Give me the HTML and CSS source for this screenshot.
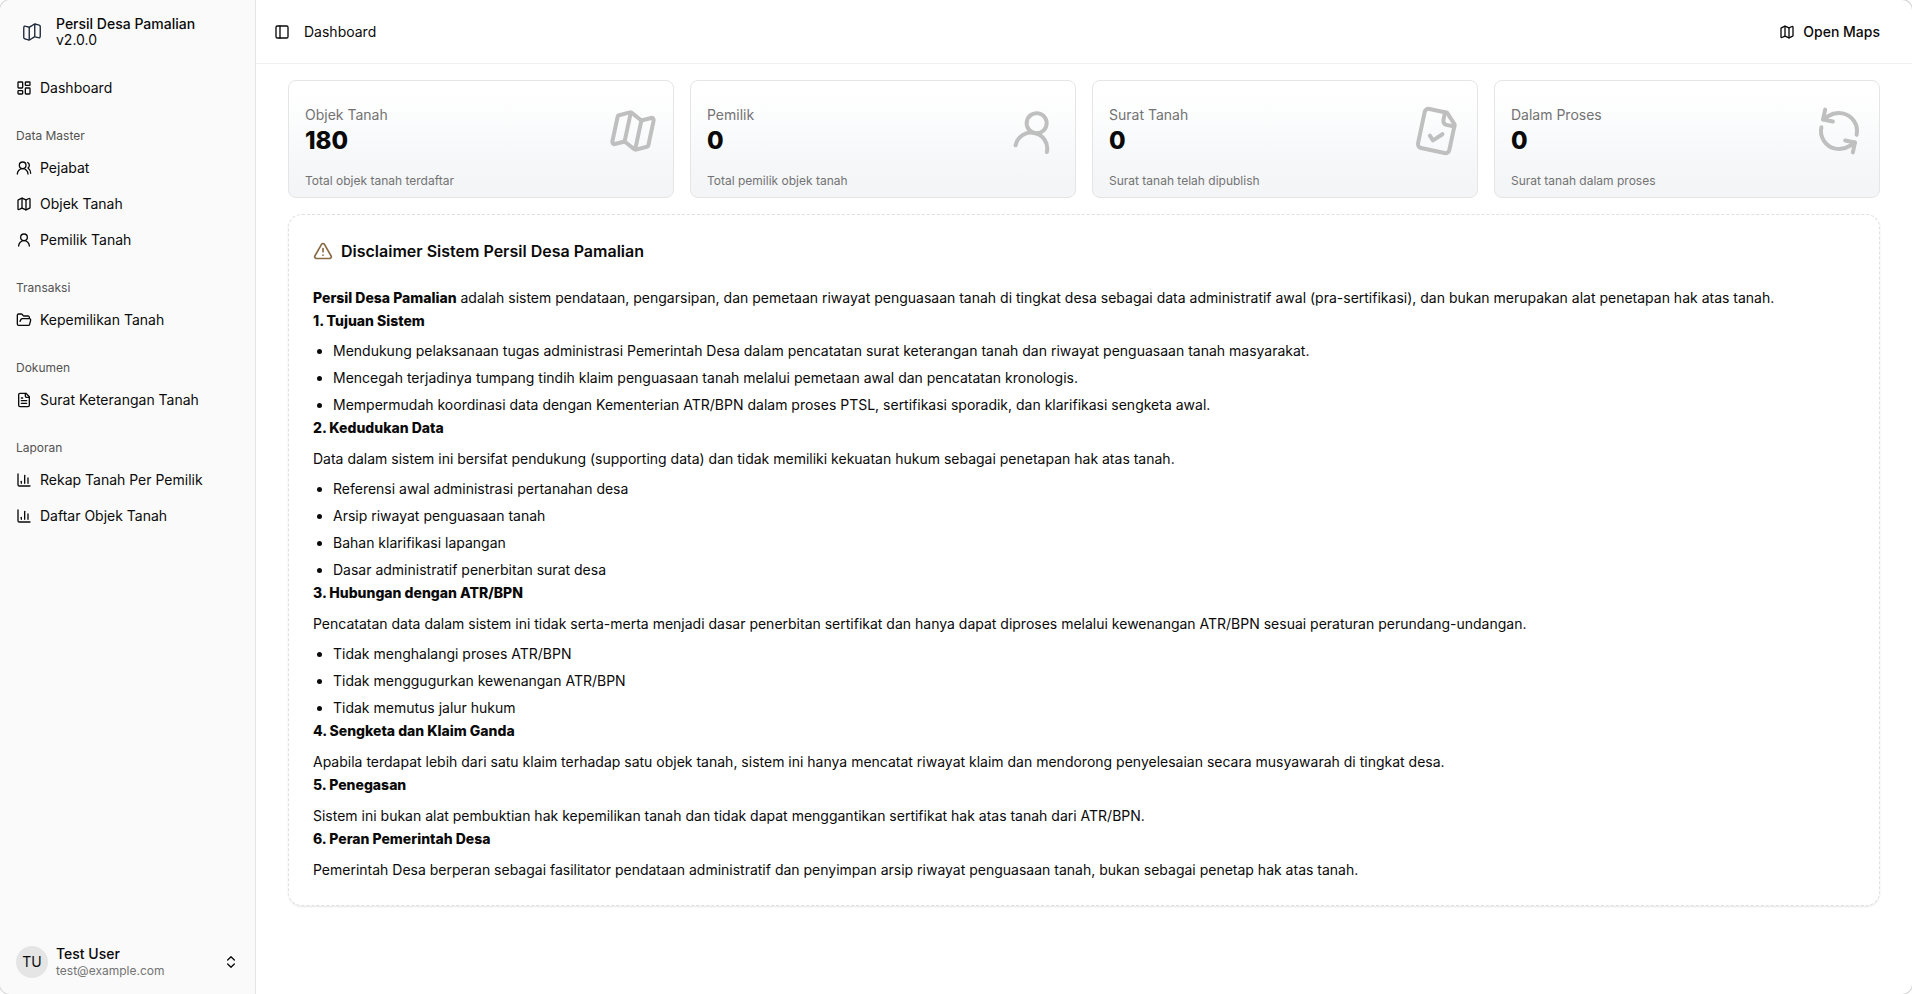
FILE: index.html
```html
<!doctype html>
<html lang="id">
<head>
    <meta charset="utf-8">
    <meta name="viewport" content="width=device-width, initial-scale=1">
    <link rel="stylesheet" href="styles.css">
    <title>Dashboard - Persil Desa Pamalian</title>
</head>
<body>
    <!-- icon sprite -->
    <svg class="sprite" aria-hidden="true">
        <symbol id="i-brand" viewBox="0 0 24 24">
            <path d="M3 8.71C3 7.24 3 6.5 3.39 6.07a1.5 1.5 0 0 1 .5-.36C4.42 5.47 5.12 5.71 6.52 6.17 7.59 6.53 8.12 6.71 8.66 6.69A3 3 0 0 0 9.25 6.61C9.77 6.49 10.24 6.17 11.18 5.55L12.56 4.63C13.76 3.83 14.36 3.43 15.05 3.34 15.73 3.24 16.42 3.47 17.78 3.93L18.95 4.32C19.94 4.65 20.43 4.81 20.72 5.2 21 5.6 21 6.12 21 7.16V15.29C21 16.76 21 17.5 20.61 17.93A1.5 1.5 0 0 1 20.11 18.29C19.58 18.53 18.88 18.29 17.48 17.83 16.41 17.47 15.88 17.29 15.34 17.31A3 3 0 0 0 14.75 17.39C14.23 17.51 13.76 17.83 12.82 18.45L11.44 19.37C10.24 20.17 9.64 20.57 8.95 20.66 8.27 20.76 7.58 20.53 6.22 20.07L5.05 19.68C4.06 19.35 3.57 19.19 3.28 18.8 3 18.4 3 17.88 3 16.84Z"/>
            <path d="M9 6.64V20.5"/><path d="M15 3.5V17"/>
        </symbol>
        <symbol id="i-map" viewBox="0 0 24 24">
            <path d="M14.106 5.553a2 2 0 0 0 1.788 0l3.659-1.83A1 1 0 0 1 21 4.619v12.764a1 1 0 0 1-.553.894l-4.553 2.277a2 2 0 0 1-1.788 0l-4.212-2.106a2 2 0 0 0-1.788 0l-3.659 1.83A1 1 0 0 1 3 19.381V6.618a1 1 0 0 1 .553-.894l4.553-2.277a2 2 0 0 1 1.788 0z"/>
            <path d="M15 5.764v15"/><path d="M9 3.236v15"/>
        </symbol>
        <symbol id="i-dashboard" viewBox="0 0 24 24">
            <rect width="7" height="9" x="3" y="3" rx="1"/><rect width="7" height="5" x="14" y="3" rx="1"/>
            <rect width="7" height="9" x="14" y="12" rx="1"/><rect width="7" height="5" x="3" y="16" rx="1"/>
        </symbol>
        <symbol id="i-users" viewBox="0 0 24 24">
            <path d="M18 21a8 8 0 0 0-16 0"/><circle cx="10" cy="8" r="5"/><path d="M22 20c0-3.37-2-6.5-4-8a5 5 0 0 0-.45-8.3"/>
        </symbol>
        <symbol id="i-user" viewBox="0 0 24 24">
            <circle cx="12" cy="8" r="5"/><path d="M20 21a8 8 0 0 0-16 0"/>
        </symbol>
        <symbol id="i-folder" viewBox="0 0 24 24">
            <path d="m6 14 1.5-2.9A2 2 0 0 1 9.24 10H20a2 2 0 0 1 1.94 2.5l-1.54 6a2 2 0 0 1-1.95 1.5H4a2 2 0 0 1-2-2V5a2 2 0 0 1 2-2h3.9a2 2 0 0 1 1.69.9l.81 1.2a2 2 0 0 0 1.67.9H18a2 2 0 0 1 2 2v2"/>
        </symbol>
        <symbol id="i-file" viewBox="0 0 24 24">
            <path d="M15 2H6a2 2 0 0 0-2 2v16a2 2 0 0 0 2 2h12a2 2 0 0 0 2-2V7Z"/><path d="M14 2v4a2 2 0 0 0 2 2h4"/>
            <path d="M10 9H8"/><path d="M16 13H8"/><path d="M16 17H8"/>
        </symbol>
        <symbol id="i-file-check" viewBox="0 0 24 24">
            <path d="M15 2H6a2 2 0 0 0-2 2v16a2 2 0 0 0 2 2h12a2 2 0 0 0 2-2V7Z"/><path d="M14 2v4a2 2 0 0 0 2 2h4"/>
            <path d="m9 15 2 2 4-4"/>
        </symbol>
        <symbol id="i-chart" viewBox="0 0 24 24">
            <path d="M3 3v16a2 2 0 0 0 2 2h16"/><path d="M18 17V9"/><path d="M13 17V5"/><path d="M8 17v-3"/>
        </symbol>
        <symbol id="i-refresh" viewBox="0 0 24 24">
            <path d="M21 12a9 9 0 0 0-9-9 9.75 9.75 0 0 0-6.74 2.74L3 8"/><path d="M3 3v5h5"/>
            <path d="M3 12a9 9 0 0 0 9 9 9.75 9.75 0 0 0 6.74-2.74L21 16"/><path d="M16 16h5v5"/>
        </symbol>
        <symbol id="i-panel" viewBox="0 0 24 24">
            <rect width="18" height="18" x="3" y="3" rx="2"/><path d="M9 3v18"/>
        </symbol>
        <symbol id="i-sort" viewBox="0 0 24 24">
            <path d="m7 15 5 5 5-5"/><path d="m7 9 5-5 5 5"/>
        </symbol>
        <symbol id="i-warning" viewBox="0 0 24 24">
            <path d="m21.73 18-8-14a2 2 0 0 0-3.48 0l-8 14A2 2 0 0 0 4 21h16a2 2 0 0 0 1.73-3"/><path d="M12 9v4"/><path d="M12 17h.01"/>
        </symbol>
    </svg>

    <div class="app">
        <aside class="sidebar">
            <a class="brand" href="#">
                <span class="brand-logo"><svg class="icon"><use href="#i-brand"/></svg></span>
                <span class="brand-text">
                    <span class="brand-name">Persil Desa Pamalian</span>
                    <span>v2.0.0</span>
                </span>
            </a>

            <nav class="nav">
                <div class="nav-group">
                    <a class="nav-link" href="#"><svg class="icon"><use href="#i-dashboard"/></svg>Dashboard</a>
                </div>
                <div class="nav-group">
                    <div class="nav-label">Data Master</div>
                    <a class="nav-link" href="#"><svg class="icon"><use href="#i-users"/></svg>Pejabat</a>
                    <a class="nav-link" href="#"><svg class="icon"><use href="#i-map"/></svg>Objek Tanah</a>
                    <a class="nav-link" href="#"><svg class="icon"><use href="#i-user"/></svg>Pemilik Tanah</a>
                </div>
                <div class="nav-group">
                    <div class="nav-label">Transaksi</div>
                    <a class="nav-link" href="#"><svg class="icon"><use href="#i-folder"/></svg>Kepemilikan Tanah</a>
                </div>
                <div class="nav-group">
                    <div class="nav-label">Dokumen</div>
                    <a class="nav-link" href="#"><svg class="icon"><use href="#i-file"/></svg>Surat Keterangan Tanah</a>
                </div>
                <div class="nav-group">
                    <div class="nav-label">Laporan</div>
                    <a class="nav-link" href="#"><svg class="icon"><use href="#i-chart"/></svg>Rekap Tanah Per Pemilik</a>
                    <a class="nav-link" href="#"><svg class="icon"><use href="#i-chart"/></svg>Daftar Objek Tanah</a>
                </div>
            </nav>

            <button class="user" type="button">
                <span class="avatar">TU</span>
                <span class="user-text">
                    <span class="user-name">Test User</span>
                    <span class="user-mail">test@example.com</span>
                </span>
                <svg class="icon"><use href="#i-sort"/></svg>
            </button>
        </aside>

        <div class="page">
            <header class="topbar">
                <button class="toggle" type="button" aria-label="Toggle Sidebar"><svg class="icon"><use href="#i-panel"/></svg></button>
                <span class="crumb">Dashboard</span>
                <a class="maps-link" href="#"><svg class="icon"><use href="#i-map"/></svg>Open Maps</a>
            </header>

            <main class="content">
                <section class="stats">
                    <div class="stat">
                        <div class="stat-body">
                            <div class="stat-label">Objek Tanah</div>
                            <div class="stat-value">180</div>
                            <div class="stat-note">Total objek tanah terdaftar</div>
                        </div>
                        <svg class="icon stat-icon"><use href="#i-map"/></svg>
                    </div>
                    <div class="stat">
                        <div class="stat-body">
                            <div class="stat-label">Pemilik</div>
                            <div class="stat-value">0</div>
                            <div class="stat-note">Total pemilik objek tanah</div>
                        </div>
                        <svg class="icon stat-icon"><use href="#i-user"/></svg>
                    </div>
                    <div class="stat">
                        <div class="stat-body">
                            <div class="stat-label">Surat Tanah</div>
                            <div class="stat-value">0</div>
                            <div class="stat-note">Surat tanah telah dipublish</div>
                        </div>
                        <svg class="icon stat-icon"><use href="#i-file-check"/></svg>
                    </div>
                    <div class="stat">
                        <div class="stat-body">
                            <div class="stat-label">Dalam Proses</div>
                            <div class="stat-value">0</div>
                            <div class="stat-note">Surat tanah dalam proses</div>
                        </div>
                        <svg class="icon stat-icon"><use href="#i-refresh"/></svg>
                    </div>
                </section>

                <section class="disclaimer">
                    <h2 class="disclaimer-title"><svg class="icon"><use href="#i-warning"/></svg>Disclaimer Sistem Persil Desa Pamalian</h2>
                    <div class="prose">
                        <p><strong>Persil Desa Pamalian</strong> adalah sistem pendataan, pengarsipan, dan pemetaan riwayat penguasaan tanah di tingkat desa sebagai data administratif awal (pra-sertifikasi), dan bukan merupakan alat penetapan hak atas tanah.</p>
                        <h3>1. Tujuan Sistem</h3>
                        <ul>
                            <li>Mendukung pelaksanaan tugas administrasi Pemerintah Desa dalam pencatatan surat keterangan tanah dan riwayat penguasaan tanah masyarakat.</li>
                            <li>Mencegah terjadinya tumpang tindih klaim penguasaan tanah melalui pemetaan awal dan pencatatan kronologis.</li>
                            <li>Mempermudah koordinasi data dengan Kementerian ATR/BPN dalam proses PTSL, sertifikasi sporadik, dan klarifikasi sengketa awal.</li>
                        </ul>
                        <h3>2. Kedudukan Data</h3>
                        <p>Data dalam sistem ini bersifat pendukung (supporting data) dan tidak memiliki kekuatan hukum sebagai penetapan hak atas tanah.</p>
                        <ul>
                            <li>Referensi awal administrasi pertanahan desa</li>
                            <li>Arsip riwayat penguasaan tanah</li>
                            <li>Bahan klarifikasi lapangan</li>
                            <li>Dasar administratif penerbitan surat desa</li>
                        </ul>
                        <h3>3. Hubungan dengan ATR/BPN</h3>
                        <p>Pencatatan data dalam sistem ini tidak serta-merta menjadi dasar penerbitan sertifikat dan hanya dapat diproses melalui kewenangan ATR/BPN sesuai peraturan perundang-undangan.</p>
                        <ul>
                            <li>Tidak menghalangi proses ATR/BPN</li>
                            <li>Tidak menggugurkan kewenangan ATR/BPN</li>
                            <li>Tidak memutus jalur hukum</li>
                        </ul>
                        <h3>4. Sengketa dan Klaim Ganda</h3>
                        <p>Apabila terdapat lebih dari satu klaim terhadap satu objek tanah, sistem ini hanya mencatat riwayat klaim dan mendorong penyelesaian secara musyawarah di tingkat desa.</p>
                        <h3>5. Penegasan</h3>
                        <p>Sistem ini bukan alat pembuktian hak kepemilikan tanah dan tidak dapat menggantikan sertifikat hak atas tanah dari ATR/BPN.</p>
                        <h3>6. Peran Pemerintah Desa</h3>
                        <p>Pemerintah Desa berperan sebagai fasilitator pendataan administratif dan penyimpan arsip riwayat penguasaan tanah, bukan sebagai penetap hak atas tanah.</p>
                    </div>
                </section>
            </main>
        </div>
    </div>
</body>
</html>
```
FILE: styles.css
```css
* {
    box-sizing: border-box;
}
html, body {
    height: 100%;
}
body {
    margin: 0;
    background: #fff;
    color: #0a0a0a;
    font-family: Inter, "Liberation Sans", sans-serif;
    font-size: 14px;
    line-height: 20px;
}
a {
    color: inherit;
    text-decoration: none;
}
button {
    border: 0;
    padding: 0;
    background: none;
    color: inherit;
    font: inherit;
    text-align: left;
    cursor: pointer;
}
h2, h3, p, ul {
    margin: 0;
    padding: 0;
}
.sprite {
    display: none;
}
.icon {
    flex: none;
    width: 16px;
    height: 16px;
    fill: none;
    stroke: currentColor;
    stroke-width: 2;
    stroke-linecap: round;
    stroke-linejoin: round;
}
.app {
    display: flex;
    min-height: 100%;
    border-radius: 10px;
    box-shadow: 0 0 0 1px #d4d4d4;
    overflow: hidden;
}

/* sidebar */
.sidebar {
    flex: none;
    display: flex;
    flex-direction: column;
    width: 256px;
    padding: 8px;
    background: #fafafa;
    border-right: 1px solid #e5e5e5;
}
.brand {
    display: flex;
    align-items: center;
    gap: 8px;
    height: 48px;
    padding: 0 8px;
}
.brand-logo {
    display: flex;
    justify-content: center;
    width: 32px;
    color: #1e293b;
}
.brand-logo .icon {
    width: 22px;
    height: 22px;
    stroke-width: 1.5;
}
.brand-text {
    display: flex;
    flex-direction: column;
    line-height: 16px;
}
.brand-name {
    font-weight: 500;
}
.nav {
    flex: 1;
    display: flex;
    flex-direction: column;
    gap: 16px;
    padding-top: 16px;
}
.nav-group {
    display: flex;
    flex-direction: column;
}
.nav-link {
    display: flex;
    align-items: center;
    gap: 8px;
    height: 32px;
    padding: 0 8px;
}
.nav-link + .nav-link {
    margin-top: 4px;
}
.nav-label {
    padding: 0 8px;
    color: #525252;
    font-size: 12px;
    line-height: 32px;
}
.user {
    display: flex;
    align-items: center;
    gap: 8px;
    height: 48px;
    padding: 0 8px;
}
.avatar {
    width: 32px;
    height: 32px;
    border-radius: 50%;
    background: #e5e5e5;
    line-height: 32px;
    text-align: center;
}
.user-text {
    flex: 1;
    display: flex;
    flex-direction: column;
    line-height: 16px;
}
.user-name {
    font-weight: 500;
    line-height: 18px;
}
.user-mail {
    color: #737373;
    font-size: 12px;
}

/* page */
.page {
    flex: 1;
    min-width: 0;
}
.topbar {
    display: flex;
    align-items: center;
    height: 64px;
    padding: 0 32px 0 12px;
    border-bottom: 1px solid #f0f0f0;
}
.toggle {
    display: flex;
    align-items: center;
    justify-content: center;
    width: 28px;
    height: 28px;
}
.crumb {
    flex: 1;
    padding-left: 8px;
}
.maps-link {
    display: flex;
    align-items: center;
    gap: 8px;
    font-weight: 500;
}
.content {
    display: flex;
    flex-direction: column;
    gap: 16px;
    padding: 16px 32px;
}
.stats {
    display: grid;
    grid-template-columns: repeat(4, 1fr);
    gap: 16px;
}
.stat {
    display: flex;
    justify-content: space-between;
    padding: 24px 16px 8px;
    border: 1px solid #e5e5e5;
    border-radius: 8px;
    background: linear-gradient(#fff 10%, #f3f5f7 90%);
}
.stat-label {
    color: #737373;
}
.stat-value {
    font-size: 24px;
    font-weight: 800;
    line-height: 32px;
}
.stat-note {
    padding-top: 16px;
    color: #737373;
    font-size: 12px;
    line-height: 16px;
}
.stat-icon {
    width: 48px;
    height: 48px;
    margin-top: 2px;
    color: #bfbfbf;
    transform: rotate(12deg);
}
.disclaimer {
    padding: 24px;
    border: 1px dashed #e0e0e0;
    border-radius: 14px;
    box-shadow: 0 1px 2px rgba(0, 0, 0, .1);
}
.disclaimer-title {
    display: flex;
    align-items: center;
    gap: 8px;
    font-size: 16px;
    font-weight: 600;
    line-height: 24px;
}
.disclaimer-title .icon {
    width: 20px;
    height: 20px;
    color: #8a6a45;
}
.prose {
    padding-top: 23px;
    line-height: 23px;
}
.prose strong {
    font-weight: 800;
}
.prose h3 {
    font-size: 14px;
    font-weight: 800;
}
.prose h3 + p {
    margin-top: 8px;
}
.prose ul {
    margin-top: 7px;
    padding-left: 20px;
}
.prose li + li {
    margin-top: 4px;
}
```
